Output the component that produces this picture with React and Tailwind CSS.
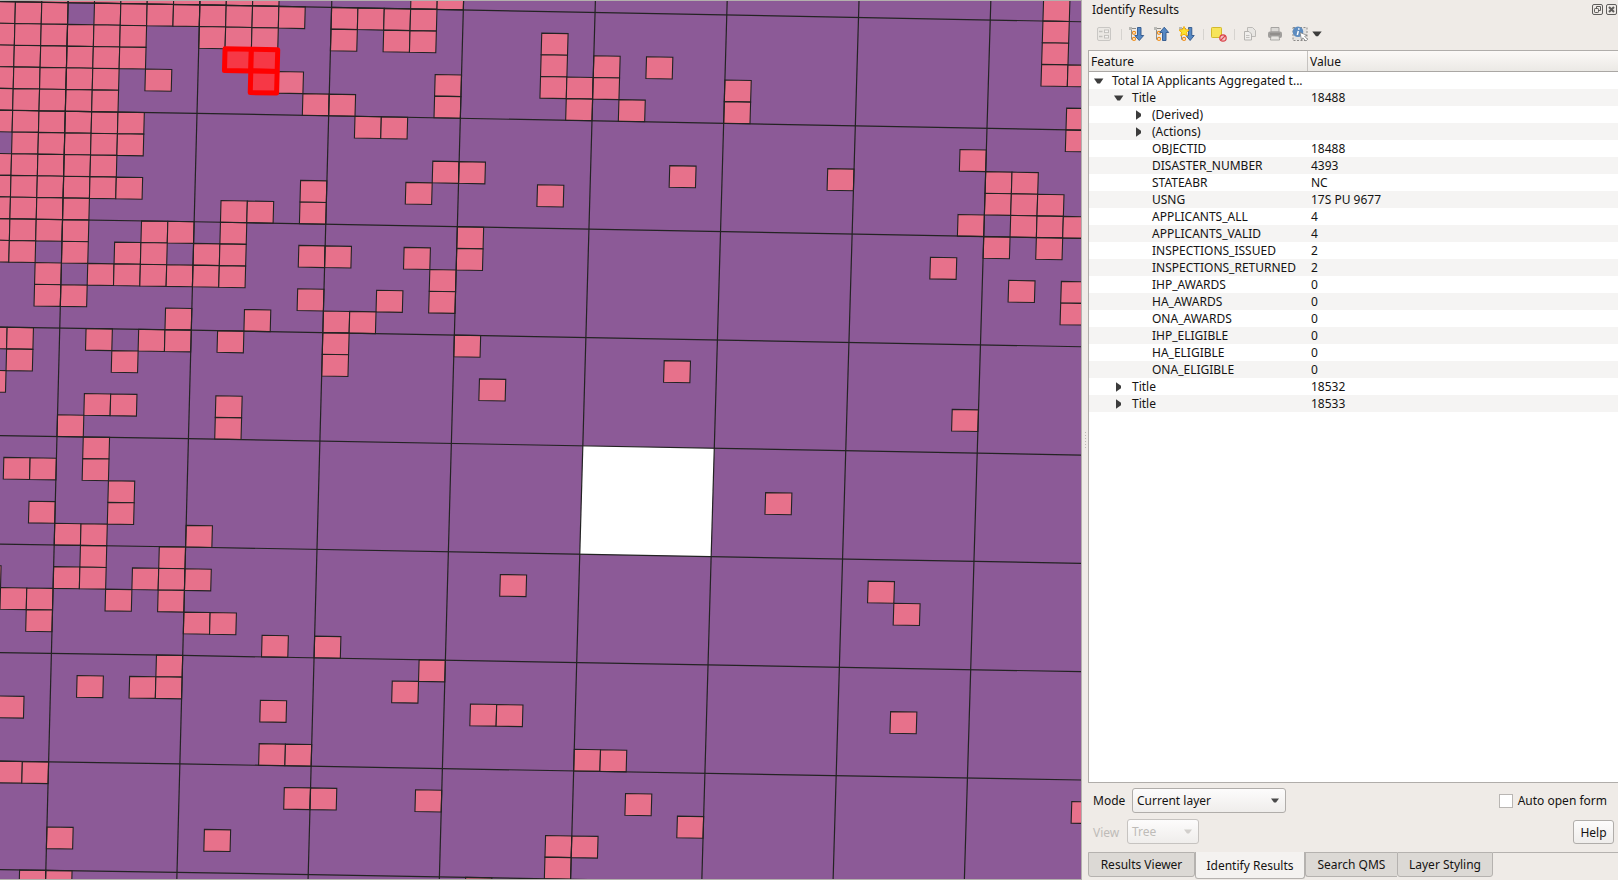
import React from "react";

// One-kilometre cells that hold applicants, keyed by row, as column indexes.
const CELLS = {
  "-6": [-8, -7, -6, -5, -4, -3, -2, -1, 0, 1, 2, 8, 9, 32],
  "-5": [-8, -7, -6, -4, -3, -2, -1, 0, 1, 2, 3, 5, 6, 7, 8, 32],
  "-4": [-8, -7, -6, -5, -4, -3, 0, 1, 2, 5, 7, 8, 13, 32],
  "-3": [-8, -7, -6, -5, -4, -3, 13, 15, 17, 32, 33],
  "-2": [-8, -7, -6, -5, -4, -2, 3, 9, 13, 14, 15, 20],
  "-1": [-8, -7, -6, -5, -4, 4, 5, 9, 14, 16, 20, 33],
  0: [-8, -7, -6, -5, -4, -3, 6, 7, 33],
  1: [-7, -6, -5, -4, -3, 29],
  2: [-8, -7, -6, -5, -4, 9, 10, 18, 24, 30, 31],
  3: [-8, -7, -6, -5, -4, -3, 4, 8, 13, 30, 31, 32],
  4: [-8, -7, -6, -5, 1, 2, 4, 29, 31, 32, 33],
  5: [-8, -7, -6, -5, -2, -1, 1, 10, 30, 32],
  6: [-8, -7, -5, -3, -2, 0, 1, 4, 5, 8, 10, 28],
  7: [-6, -4, -3, -2, -1, 0, 1, 9, 31, 33],
  8: [-6, -5, 4, 7, 9, 33],
  9: [-1, 2, 5, 6],
  10: [-8, -7, -4, -2, -1, 1, 5, 10],
  11: [-7, -3, 5, 18],
  12: [-8, 11],
  13: [-4, -3, 1, 29],
  14: [-5, 1],
  15: [-4],
  16: [-7, -6, -4],
  17: [-3, 22],
  18: [-6, -3],
  19: [-5, -4, 0],
  20: [-4, -1],
  21: [-8, -5, -4, -2, -1, 0, 12, 26],
  22: [-7, -6, -3, -1, 27],
  23: [-6, 0, 1],
  24: [3, 5],
  25: [-1, 9],
  26: [-4, -2, -1, 8],
  27: [-7, 3, 11, 12, 27],
  29: [3, 4, 15, 16],
  30: [-7, -6],
  31: [4, 5, 9, 17, 34],
  32: [19],
  33: [-5, 1, 14, 15],
  34: [14],
  35: [-6, -5, 11],
};
const SELECTED = [[1, -3], [2, -3], [2, -2]];

const point = (i, j) => {
  const x = 197 + 26.333 * i - 0.571 * j - 0.0027 * i * j;
  const y = 112.3 + (i < 0 ? 0.43 : 0.5) * i + 21.686 * j - 0.001 * i * j;
  return `${x.toFixed(2)},${y.toFixed(2)}`;
};
const quad = (i, j, n = 1) =>
  [point(i, j), point(i + n, j), point(i + n, j + n), point(i, j + n)].join(" ");

const COLS = [-10, -5, 0, 5, 10, 15, 20, 25, 30, 35];
const ROWS = [-5, 0, 5, 10, 15, 20, 25, 30, 35];

function MapCanvas() {
  return (
    <svg width="1081" height="878" viewBox="0 0 1081 878" className="block bg-[#8c5a97]">
      <polygon points={quad(15, 15, 5)} fill="#fff" />
      <g fill="#e7718b" stroke="#232323" strokeWidth="1.1">
        {Object.entries(CELLS).flatMap(([j, cols]) =>
          cols.map((i) => <polygon key={`${i},${j}`} points={quad(i, Number(j))} />)
        )}
      </g>
      <g fill="none" stroke="#232323" strokeWidth="1.2">
        {COLS.map((i) => <polyline key={i} points={`${point(i, -7)} ${point(i, 37)}`} />)}
        {ROWS.map((j) => <polyline key={j} points={`${point(-12, j)} ${point(0, j)} ${point(36, j)}`} />)}
      </g>
      <g fill="#f63846" stroke="#ff0000" strokeWidth="5" strokeLinejoin="round">
        {SELECTED.map(([i, j]) => <polygon key={`${i},${j}`} points={quad(i, j)} />)}
      </g>
    </svg>
  );
}

const TREE = [
  [0, "down", "Total IA Applicants Aggregated t...", ""],
  [1, "down", "Title", "18488"],
  [2, "right", "(Derived)", ""],
  [2, "right", "(Actions)", ""],
  [2, "", "OBJECTID", "18488"],
  [2, "", "DISASTER_NUMBER", "4393"],
  [2, "", "STATEABR", "NC"],
  [2, "", "USNG", "17S PU 9677"],
  [2, "", "APPLICANTS_ALL", "4"],
  [2, "", "APPLICANTS_VALID", "4"],
  [2, "", "INSPECTIONS_ISSUED", "2"],
  [2, "", "INSPECTIONS_RETURNED", "2"],
  [2, "", "IHP_AWARDS", "0"],
  [2, "", "HA_AWARDS", "0"],
  [2, "", "ONA_AWARDS", "0"],
  [2, "", "IHP_ELIGIBLE", "0"],
  [2, "", "HA_ELIGIBLE", "0"],
  [2, "", "ONA_ELIGIBLE", "0"],
  [1, "right", "Title", "18532"],
  [1, "right", "Title", "18533"],
];
const INDENT = ["pl-[5px]", "pl-[25px]", "pl-[45px]"];

function Arrow({ dir }) {
  return (
    <svg width="10" height="10" viewBox="0 0 10 10" fill="#3c3c3c" className="mr-[8px] shrink-0">
      {dir === "down" && <path d="M0 2.500h9.400L6 7.500H3.400z" />}
      {dir === "right" && <path d="M2 0.300v9.400L7 6.300V3.700z" />}
    </svg>
  );
}

function Tree() {
  return (
    <div className="flex h-[733px] flex-col border-y border-l border-[#b0adaa] bg-white">
      <div className="flex h-[21px] shrink-0 border-b border-[#aaa7a4] bg-linear-to-b from-[#fcf9f7] to-[#ebe9e5]">
        <div className="flex w-[219px] items-center border-r border-[#c6c3c0] pl-[2px]">Feature</div>
        <div className="flex items-center pl-[2px]">Value</div>
      </div>
      {TREE.map(([depth, dir, name, value], n) => (
        <div key={n} className="flex h-[17px] shrink-0 items-center odd:bg-[#f5f4f3] even:bg-white">
          <div className={`flex w-[219px] items-center ${INDENT[depth]}`}>
            <Arrow dir={dir} />
            {name}
          </div>
          <div className="pl-[3px]">{value}</div>
        </div>
      ))}
    </div>
  );
}

const Divider = ({ className }) => <div className={`h-[11px] w-px bg-[#d6d3cf] ${className}`} />;

function TreeGlyph() {
  return (
    <g>
      <path d="M0 2.500h7M2.500 2.500v11M2.500 7h2M2.500 13h2" stroke="#8d8d8a" fill="none" />
      <path d="M0 1h3v3H0z" fill="#b9b9b5" />
      <circle cx="5" cy="6.800" r="1.500" fill="#fff" stroke="#ef8e1b" strokeWidth="1.200" />
      <circle cx="5" cy="12.900" r="1.500" fill="#fff" stroke="#ef8e1b" strokeWidth="1.200" />
    </g>
  );
}

const Icon = ({ className = "", children }) => (
  <svg width="16" height="16" viewBox="0 0 16 16" className={`shrink-0 ${className}`}>{children}</svg>
);

function Toolbar() {
  return (
    <div className="flex h-8 items-center pl-[8px]">
      <Icon>
        <rect x="1.500" y="1.500" width="13" height="13" rx="1.500" fill="#ebe8e4" stroke="#c9c7c4" />
        <path d="M3 5.500h3.500M3 10.500h3.500" stroke="#c3c1be" strokeWidth="1.400" />
        <rect x="8.500" y="4" width="4" height="2.600" fill="#f4f2f0" stroke="#c3c1be" />
        <rect x="8.500" y="9.400" width="4" height="2.600" fill="#f4f2f0" stroke="#c3c1be" />
      </Icon>
      <Divider className="ml-[9px] mr-[7px]" />
      <Icon>
        <TreeGlyph />
        <path d="M8.500 1.500h3.500v8h2.700L10.250 14.500 5.800 9.500h2.700z" fill="#5588c4" stroke="#2f568b" strokeWidth=".9" strokeLinejoin="round" />
      </Icon>
      <Icon className="ml-[9px]">
        <TreeGlyph />
        <path d="M8.500 14.500h3.500v-8h2.700L10.250 1.200 5.800 6.500h2.700z" fill="#5588c4" stroke="#2f568b" strokeWidth=".9" strokeLinejoin="round" />
      </Icon>
      <Icon className="ml-[9px]">
        <TreeGlyph />
        <path d="M9.500 1.500h3.300v8h2.400L11.150 14.500 7 9.500h2.500z" fill="#5588c4" stroke="#2f568b" strokeWidth=".9" strokeLinejoin="round" />
        <polygon points="5,0.4 6.500,3.600 10.200,4 7.500,6.400 8.300,10 5,8.200 1.700,10 2.500,6.400 -0.200,4 3.500,3.600" fill="#fce22f" stroke="#f5a800" strokeWidth=".8" strokeLinejoin="round" />
      </Icon>
      <Divider className="ml-[8px] mr-[7px]" />
      <Icon>
        <rect x=".5" y="1.500" width="10" height="10" rx=".8" fill="#f7e45a" stroke="#d4b92b" />
        <circle cx="12" cy="12" r="3.200" fill="#f3c4c4" stroke="#d9434b" strokeWidth="1.200" />
        <path d="M9.900 14.100l4.200-4.200" stroke="#d9434b" strokeWidth="1.200" />
      </Icon>
      <Divider className="ml-[7px] mr-[8px]" />
      <Icon>
        <path d="M4.500 1.500h5l3 3v6h-8z" fill="#e8e6e3" stroke="#bcbab7" />
        <path d="M1.500 5.500h4.500l2.500 2.500v6h-7z" fill="#f0eeec" stroke="#b5b3b0" />
        <path d="M3 9.500h3.500M3 11.500h3.500" stroke="#c4c2bf" />
      </Icon>
      <Icon className="ml-[8px]">
        <path d="M4 1.500h8V6H4z" fill="#dad8d5" stroke="#a5a3a1" />
        <rect x="1" y="5.500" width="14" height="6.500" rx="2" fill="#a09e9c" />
        <path d="M3 8h10" stroke="#817f7d" />
        <path d="M4 10h8l.6 4H3.400z" fill="#e6e4e1" stroke="#9b9997" strokeWidth=".8" />
      </Icon>
      <Icon className="ml-[9px]">
        <rect x="1" y="1.500" width="14" height="13" fill="#e3e1df" stroke="#8e8c8a" strokeDasharray="2 1.500" />
        <circle cx="6" cy="5.800" r="5.300" fill="#5d8cc0" />
        <path d="M6.800 2.200v1.500M6.300 5L5.300 9" stroke="#fff" strokeWidth="1.500" />
        <path d="M8 6.500l7 2.800-2.400 1 3 3.100-1.700 1.600-3-3.200-1.300 2.300z" fill="#fff" stroke="#777" strokeWidth=".7" />
      </Icon>
      <svg width="10" height="6" viewBox="0 0 10 6" className="ml-[4px]"><path d="M.3.500h9.400L6 5.300H4z" fill="#3c3c3c" /></svg>
    </div>
  );
}

function DockTitle() {
  return (
    <div className="flex h-[18px] items-center justify-between pl-[4px] pr-px">
      <span>Identify Results</span>
      <div className="flex gap-[3px] text-[#5f5d5b]">
        <svg width="11" height="11" viewBox="0 0 11 11" fill="none" stroke="currentColor">
          <rect x=".5" y=".5" width="10" height="10" rx="1.500" />
          <rect x="2.500" y="4.500" width="4" height="4" rx=".7" />
          <path d="M4.500 4.500v-2h4v4h-2" />
        </svg>
        <svg width="11" height="11" viewBox="0 0 11 11" fill="none" stroke="currentColor">
          <rect x=".5" y=".5" width="10" height="10" rx="1.500" />
          <path d="M3 3l5 5M8 3L3 8" strokeWidth="2" />
        </svg>
      </div>
    </div>
  );
}

function Combo({ label, className, arrow }) {
  return (
    <div className={`flex h-[25px] items-center justify-between rounded-[3px] border bg-linear-to-b from-[#fdfcfc] to-[#efedeb] pl-[4px] pr-[6px] ${className}`}>
      <span>{label}</span>
      <svg width="8" height="5" viewBox="0 0 8 5"><path d="M0 .500h8L5 4.500H3z" fill={arrow} /></svg>
    </div>
  );
}

function Footer() {
  return (
    <div className="flex h-[69px] flex-col pt-[5px]">
      <div className="flex h-[25px] items-center pl-[5px] pr-[11px]">
        <span className="w-[39px]">Mode</span>
        <Combo label="Current layer" className="w-[154px] border-[#b0adaa]" arrow="#4a4a4a" />
        <span className="ml-auto mr-[5px] h-[14px] w-[14px] border border-[#b9b6b3] bg-white" />
        <span>Auto open form</span>
      </div>
      <div className="mt-[6px] flex h-[25px] items-center pl-[5px] pr-[4px]">
        <span className="w-[34px] pt-px text-[#bebbb8]">View</span>
        <Combo label="Tree" className="w-[72px] border-[#c6c3c0] text-[#bebbb8]" arrow="#d2cfcc" />
        <button className="ml-auto h-[24px] w-[41px] rounded-[3px] border border-[#b0adaa] bg-linear-to-b from-[#fdfcfc] to-[#efedeb] pt-px">Help</button>
      </div>
    </div>
  );
}

function Tabs() {
  const idle = "flex h-[25px] items-center justify-center border border-[#b5b2af] bg-[#dcd9d5]";
  return (
    <div className="flex h-[28px] items-start">
      <div className={`w-[107px] rounded-b-[3px] ${idle}`}>Results Viewer</div>
      <div className="flex h-[27px] w-[110px] items-center justify-center rounded-b-[3px] border-x border-b border-[#b5b2af] bg-[#f4f2f0]">Identify Results</div>
      <div className={`w-[92px] rounded-bl-[3px] border-r-0 ${idle}`}>Search QMS</div>
      <div className={`w-[96px] rounded-b-[3px] ${idle}`}>Layer Styling</div>
      <div className="h-px flex-1 bg-[#b5b2af]" />
    </div>
  );
}

export default function App() {
  return (
    <div className="flex h-[880px] w-[1618px] overflow-hidden bg-[#efebe7] font-['Noto_Sans',sans-serif] text-[12px] leading-[17px] whitespace-nowrap text-[#141312]">
      <div className="w-[1082px] shrink-0 border-y border-r border-[#b3b0ad]">
        <MapCanvas />
      </div>
      <div className="flex w-[6px] shrink-0 flex-col items-center justify-center gap-[2px]">
        {[0, 1, 2, 3, 4, 5].map((n) => <span key={n} className="h-px w-px bg-[#bdb9b5]" />)}
      </div>
      <div className="flex min-w-0 flex-1 flex-col">
        <DockTitle />
        <Toolbar />
        <Tree />
        <Footer />
        <Tabs />
      </div>
    </div>
  );
}
